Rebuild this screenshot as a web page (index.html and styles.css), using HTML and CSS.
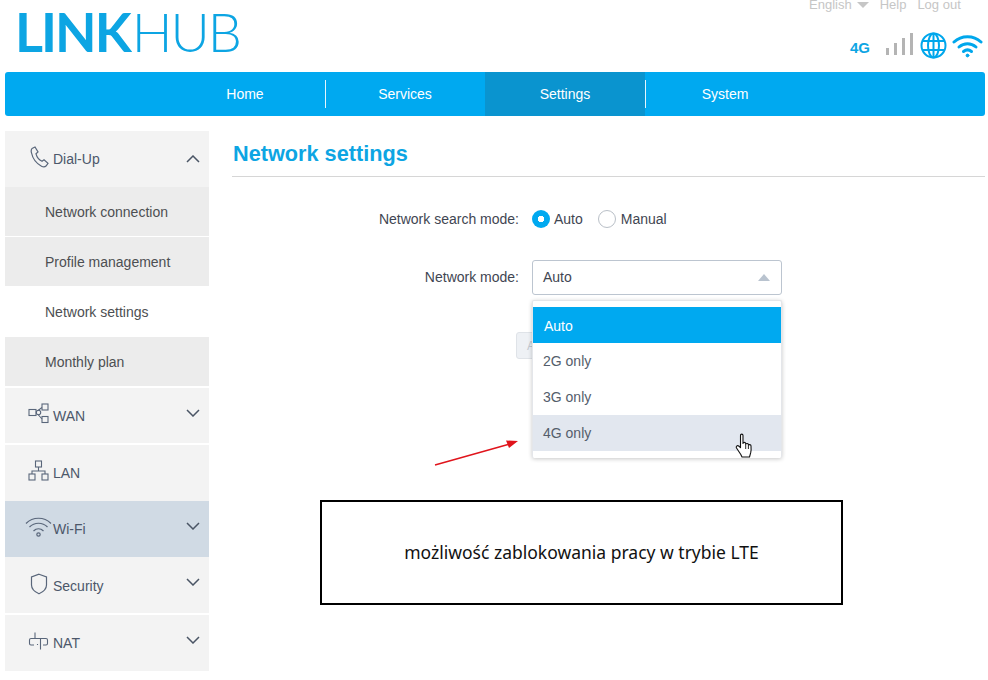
FILE: index.html
```html
<!DOCTYPE html>
<html lang="en">
<head>
<meta charset="utf-8">
<title>LinkHub - Network settings</title>
<link rel="stylesheet" href="styles.css">
</head>
<body>
<div class="page">
  <header class="header">
    <div class="logo"><span class="logo-bold">LINK</span><span class="logo-thin">HUB</span></div>
    <div class="header-right">
      <div class="toplinks">
        <span class="lang">English<i class="lang-caret"></i></span>
        <span>Help</span>
        <span>Log out</span>
      </div>
      <div class="status">
        <span class="net">4G</span>
        <svg class="ic-signal" width="29" height="24" viewBox="0 0 29 24"><g fill="#b4b4b4"><rect x="1" y="16" width="3" height="7"/><rect x="9" y="11" width="3" height="12"/><rect x="17" y="6" width="3" height="17"/><rect x="25" y="1" width="3" height="22"/></g></svg>
        <svg class="ic-globe" width="27" height="27" viewBox="0 0 27 27" fill="none" stroke="#00a7ec" stroke-width="2"><circle cx="13.500" cy="13.500" r="12"/><ellipse cx="13.500" cy="13.500" rx="5.500" ry="12"/><path d="M13.500 1.500v24M2 9h23M2 18h23"/></svg>
        <svg class="ic-wifi" width="31" height="25" viewBox="0 0 31 25" fill="none" stroke="#00a7ec" stroke-width="3" stroke-linecap="round"><path d="M2 9C9.500 2 21.500 2 29 9"/><path d="M7 14c5-4.500 12-4.500 17 0"/><path d="M11.500 18.500c2.500-2 5.500-2 8 0"/><circle cx="15.500" cy="22.500" r="1.400" fill="#00a7ec" stroke-width="1"/></svg>
      </div>
    </div>
  </header>

  <nav class="nav">
    <a class="nav-item nav-sep">Home</a>
    <a class="nav-item">Services</a>
    <a class="nav-item nav-active">Settings</a>
    <a class="nav-item nav-left-sep">System</a>
  </nav>

  <div class="body">
    <aside class="side">
      <div class="menu menu-open">
        <svg class="mi mi-dial" width="20" height="22" viewBox="0 0 20 22" fill="none" stroke="#59667a" stroke-width="1.200"><path d="M2 2.500 5 1l3 5-2 1.800c.8 3 3 6 6 7.400l2-1.400 4 3.600-2 2.600c-1 1-3 1-4.500.2C6.500 17.500 2.500 12 1.400 6.500 1 5 1.200 3.500 2 2.500z"/></svg>
        <span class="mt">Dial-Up</span>
        <svg class="chev" width="14" height="8" viewBox="0 0 14 8" fill="none" stroke="#4a5565" stroke-width="1.500"><path d="M1 7l6-6 6 6"/></svg>
      </div>
      <a class="sub sub-gap">Network connection</a>
      <a class="sub">Profile management</a>
      <a class="sub sub-cur">Network settings</a>
      <a class="sub sub-last">Monthly plan</a>

      <div class="menu menu-gap menu-wan">
        <svg class="mi" width="21" height="21" viewBox="0 0 21 21" fill="none" stroke="#59667a" stroke-width="1.100"><rect x="1" y="6.500" width="7" height="6"/><rect x="14" y="1" width="6" height="6"/><rect x="14" y="13.500" width="6" height="6"/><circle cx="10.500" cy="9.500" r="2.200"/><path d="M8 9.500h.3M14 4.500l-4 3M14 16l-4-4.500"/></svg>
        <span class="mt">WAN</span>
        <svg class="chev" width="14" height="8" viewBox="0 0 14 8" fill="none" stroke="#4a5565" stroke-width="1.500"><path d="M1 1l6 6 6-6"/></svg>
      </div>
      <div class="menu menu-gap">
        <svg class="mi" width="21" height="21" viewBox="0 0 21 21" fill="none" stroke="#59667a" stroke-width="1.100"><rect x="7.500" y="1" width="6" height="6"/><rect x="1" y="14" width="6" height="6"/><rect x="14" y="14" width="6" height="6"/><path d="M10.500 7v4M4 14v-3h13v3"/></svg>
        <span class="mt">LAN</span>
      </div>
      <div class="menu menu-hot">
        <svg class="mi mi-wifi" width="27" height="22" viewBox="0 0 27 22" fill="none" stroke="#59667a" stroke-width="1.200"><path d="M1 7.500c7-7 18-7 25 0"/><path d="M4.500 11c5-5 13-5 18 0"/><path d="M8.500 15c3-3 7-3 10 0"/><circle cx="13.500" cy="18.500" r="1.700"/></svg>
        <span class="mt">Wi-Fi</span>
        <svg class="chev" width="14" height="8" viewBox="0 0 14 8" fill="none" stroke="#4a5565" stroke-width="1.500"><path d="M1 1l6 6 6-6"/></svg>
      </div>
      <div class="menu">
        <svg class="mi mi-sec" width="18" height="22" viewBox="0 0 18 22" fill="none" stroke="#59667a" stroke-width="1.200"><path d="M9 1.200 16.500 4v8c0 4-3.500 7-7.500 8.800C5 19 1.500 16 1.500 12V4z"/></svg>
        <span class="mt mt-sec">Security</span>
        <svg class="chev" width="14" height="8" viewBox="0 0 14 8" fill="none" stroke="#4a5565" stroke-width="1.500"><path d="M1 1l6 6 6-6"/></svg>
      </div>
      <div class="menu menu-gap">
        <svg class="mi mi-nat" width="21" height="19" viewBox="0 0 21 19" fill="none" stroke="#59667a" stroke-width="1.100"><path d="M7 .5v6M6 13H3c-1 0-1.500-.5-1.500-1.500V8C1.500 7 2 6.500 3 6.500h15c1 0 1.500.5 1.500 1.500v3.500c0 1-.5 1.500-1.500 1.500h-3M12.500 6.500v11M9.500 12v1"/></svg>
        <span class="mt">NAT</span>
        <svg class="chev" width="14" height="8" viewBox="0 0 14 8" fill="none" stroke="#4a5565" stroke-width="1.500"><path d="M1 1l6 6 6-6"/></svg>
      </div>
    </aside>

    <main class="main">
      <h1 class="title">Network settings</h1>
      <div class="row row-search">
        <label class="lbl">Network search mode:</label>
        <span class="radio radio-on"></span><span class="rt rt-auto">Auto</span>
        <span class="radio"></span><span class="rt">Manual</span>
      </div>
      <div class="row row-mode">
        <label class="lbl lbl-mode">Network mode:</label>
        <div class="select">
          <span>Auto</span>
          <i class="select-caret"></i>
          <div class="dropdown">
            <div class="opt opt-sel">Auto</div>
            <div class="opt">2G only</div>
            <div class="opt">3G only</div>
            <div class="opt opt-hover">4G only</div>
          </div>
        </div>
      </div>
      <div class="row row-btn">
        <button class="apply">Apply</button>
      </div>
    </main>
  </div>
</div>

<svg class="arrow" width="90" height="30" viewBox="0 0 90 30"><path d="M1 28 74 7.500" stroke="#e0141c" stroke-width="1.500" fill="none"/><path d="M84 4 72 3.500 75 11z" fill="#e0141c"/></svg>

<svg class="hand" width="20" height="27" viewBox="0 0 20 27"><path d="M5.500 2.500c0-1.800 2.500-1.800 2.500 0v8c.2-1.500 2.500-1.500 2.700 0v1c.2-1.300 2.500-1.300 2.700 0v1c.2-1.200 2.500-1.200 2.600.2.200 2.500.2 5-.3 7l-1.200 4.300H7l-1.200-2.500L1.500 15c-1-1.500.8-3 2.200-2l1.800 1.700z" fill="#fff" stroke="#111" stroke-width="1.100" stroke-linejoin="round"/><path d="M10.700 12v4M13.400 13v3" stroke="#111" stroke-width=".9"/></svg>

<div class="note"><p>możliwość zablokowania pracy w trybie LTE</p></div>
</body>
</html>
```
FILE: styles.css
```css
html, body { margin: 0; padding: 0; background: #fff; }
body { font-family: "Liberation Sans", Arial, sans-serif; font-size: 14px; color: #4a5463; width: 988px; height: 680px; overflow: hidden; position: relative; }
.page { padding: 0 3px 0 5px; }

.header { height: 72px; display: flex; justify-content: space-between; }
.logo { font-family: Lato, sans-serif; font-size: 54px; line-height: 63px; color: #0da5e3; margin-left: 10px; white-space: nowrap; }
.logo-bold { font-weight: 700; letter-spacing: -2px; }
.logo-thin { font-weight: 300; margin-left: 2px; letter-spacing: -2px; }

.header-right { width: 176px; display: flex; flex-direction: column; }
.toplinks { display: flex; gap: 11px; margin-top: -3px; height: 16px; line-height: 16px; font-size: 13px; color: #c6c6c6; white-space: nowrap; }
.lang { display: flex; align-items: center; }
.lang-caret { width: 0; height: 0; margin-left: 5px; border-left: 6px solid transparent; border-right: 6px solid transparent; border-top: 6px solid #c6c6c6; }
.status { display: flex; align-items: center; margin-top: 19px; margin-left: 41px; }
.net { color: #0da5e3; font-weight: 700; font-size: 15px; width: 35px; margin-top: 3px; }
.ic-signal { margin-top: -3px; }
.ic-globe { margin-left: 6px; }
.ic-wifi { margin-left: 5px; }

.nav { height: 44px; background: #00a9f0; border-radius: 3px; display: flex; padding-left: 160px; }
.nav-item { width: 160px; display: flex; align-items: center; justify-content: center; color: #fff; font-size: 14px; position: relative; box-sizing: border-box; }
.nav-sep::after { content: ""; position: absolute; right: -1px; top: 8px; height: 28px; width: 1px; background: #e4f5fd; }
.nav-left-sep::before { content: ""; position: absolute; left: 0; top: 8px; height: 28px; width: 1px; background: #e4f5fd; }
.nav-active { background: #0a94cf; }

.body { display: flex; margin-top: 15px; gap: 23px; }
.side { width: 204px; flex: none; }
.menu { height: 56px; background: #f3f3f3; display: flex; align-items: center; padding-left: 48px; position: relative; color: #4c576a; font-size: 14px; }
.menu-gap { margin-top: 2px; }
.menu-wan { height: 55px; }
.menu-hot { background: #d0dae4; }
.mt-sec { position: relative; top: 1px; }
.mi { position: absolute; left: 23px; top: 15px; }
.mi-dial { left: 25px; }
.mi-wifi { left: 20px; }
.mi-sec { left: 25px; top: 16px; }
.mi-nat { top: 17px; }
.chev { position: absolute; right: 9px; top: 21px; }
.menu-open .chev { top: 24px; }
.sub { display: block; height: 49px; line-height: 51px; background: #ececec; padding-left: 40px; color: #4d4f52; font-size: 14px; margin-bottom: 1px; }
.sub-cur { background: #fff; }
.sub-last { margin-bottom: 0; }

.main { flex: 1; }
.title { margin: 0; height: 45px; line-height: 45px; padding-left: 1px; font-size: 21.700px; font-weight: 700; color: #0da5e3; border-bottom: 1px solid #d6d6d6; }
.row { display: flex; align-items: center; }
.lbl { width: 287px; text-align: right; margin-right: 13px; flex: none; color: #3f4652; }
.lbl-mode { margin-bottom: 1px; }
.row-search { margin-top: 28px; height: 28px; }
.radio { width: 16px; height: 16px; border: 1px solid #b9bfc7; border-radius: 50%; margin-left: 15px; background: #fff; flex: none; }
.radio-on { width: 18px; height: 18px; border: 0; margin-left: 0; background: radial-gradient(circle, #fff 0 3px, #00a9f0 3.500px); }
.rt { margin-left: 5px; color: #3f4652; }
.rt-auto { margin-left: 4px; }
.row-mode { margin-top: 27px; }
.select { width: 250px; height: 35px; box-sizing: border-box; border: 1px solid #bcc5d0; border-radius: 3px; display: flex; align-items: center; padding: 0 0 1px 10px; position: relative; color: #3f4652; background: #fff; }
.select-caret { position: absolute; right: 11px; top: 13px; width: 0; height: 0; border-left: 6px solid transparent; border-right: 6px solid transparent; border-bottom: 7px solid #b9c3cf; }
.dropdown { position: absolute; left: -1px; top: 39px; width: 250px; height: 158px; box-sizing: border-box; padding-top: 6px; background: #fff; border: 1px solid #e4e6ea; border-bottom: 0; border-radius: 2px; box-shadow: 0 1px 4px rgba(0,0,0,.22); z-index: 2; }
.opt { height: 36px; line-height: 36px; padding-left: 10px; color: #545d6b; }
.opt-sel { background: #00a9f0; color: #fff; padding-left: 11px; line-height: 38px; }
.opt-hover { background: #e2e7ef; }
.row-btn { margin-top: 37px; padding-left: 284px; }
.apply { width: 80px; height: 27px; border: 1px solid #dfe3e8; border-radius: 3px; background: #eef1f5; color: #c3c8cf; font: 12px "Liberation Sans", Arial, sans-serif; text-align: left; padding-left: 10px; }

.arrow { position: absolute; left: 434px; top: 437px; }
.hand { position: absolute; left: 735px; top: 433px; z-index: 3; }
.note { position: absolute; left: 320px; top: 500px; width: 523px; height: 105px; box-sizing: border-box; border: 2px solid #000; padding-bottom: 2px; display: flex; align-items: center; justify-content: center; background: #fff; }
.note p { margin: 0; font-family: "Noto Sans", sans-serif; font-size: 17.500px; color: #111; }
```
